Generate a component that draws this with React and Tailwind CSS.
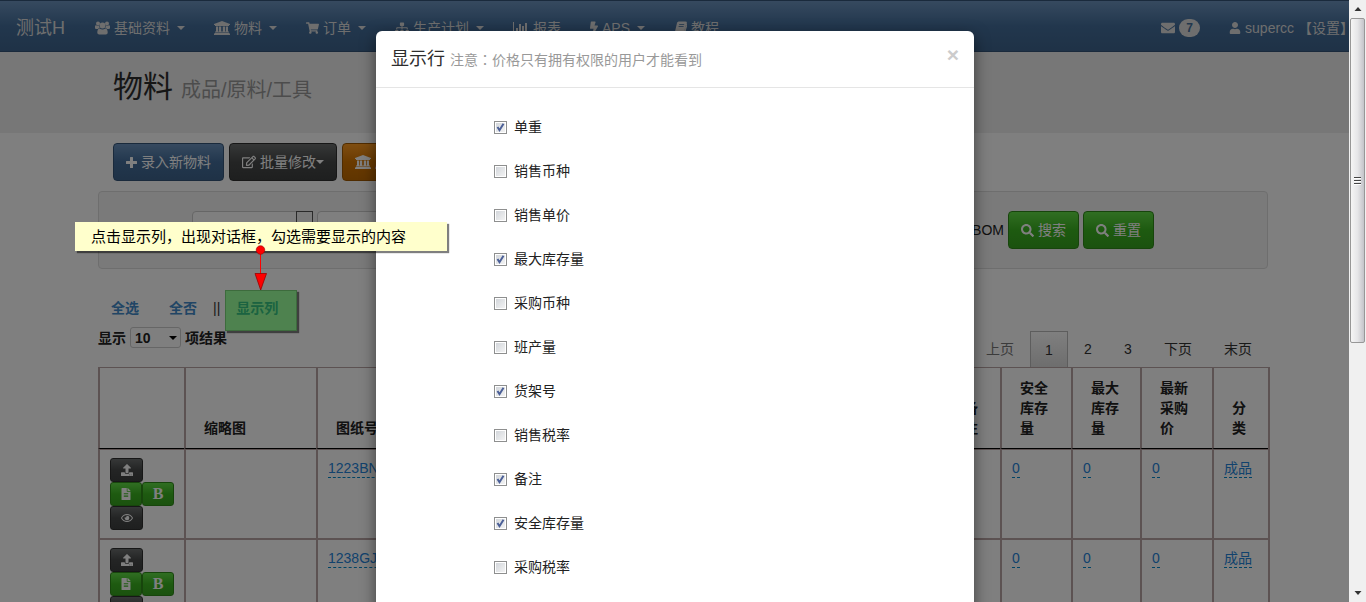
import React from "react";
import {
  FaShoppingCart, FaSitemap, FaBolt, FaEnvelope, FaUser,
  FaRegEdit, FaSearch, FaUpload, FaFileAlt, FaRegEye,
} from "react-icons/fa";

const BLUE = "border-[#345578] bg-linear-to-b from-[#6d94bf] via-[#446e9b] to-[#3e648d]";
const DARK = "border-[#2e2f2f] bg-linear-to-b from-[#6d7070] via-[#474949] to-[#3d3f3f]";
const GREEN = "border-[#2e8a19] bg-linear-to-b from-[#61dd45] via-[#3cb521] to-[#36a41e]";
const ORANGE = "border-[#a15900] bg-linear-to-b from-[#ff9c21] via-[#d47500] to-[#c06a00]";

function Caret() {
  return (
    <svg viewBox="0 0 8 4" className="w-2 h-1 shrink-0" aria-hidden="true">
      <path d="M0 0h8L4 4z" fill="currentColor" />
    </svg>
  );
}

function BarChart({ className }) {
  return (
    <svg viewBox="0 0 16 14" className={className} aria-hidden="true" fill="currentColor">
      <path d="M0 1h1v11h15v1H0zM3 7h2v4H3zM6 3h2v8H6zM9 5h2v6H9zM12 2h2v9h-2z" />
    </svg>
  );
}

function Bank({ className }) {
  return (
    <svg viewBox="0 0 16 14" className={className} aria-hidden="true" fill="currentColor">
      <path d="M8 0l8 3v1h-1v1H1V4H0V3zM2 5.600h2.200v5H5v-5h2.200v5h1.600v-5H11v5h.8v-5H14v5h1v1H1v-1h1zM.5 12h15v.8h.5V14H0v-1.200h.5z" />
    </svg>
  );
}

function Users({ className }) {
  return (
    <svg viewBox="0 0 15 14" className={className} aria-hidden="true" fill="currentColor">
      <circle cx="7.500" cy="4.500" r="3" />
      <circle cx="3" cy="2.500" r="2" />
      <circle cx="12" cy="2.500" r="2" />
      <path d="M0 5.500C0 4.600.5 4 1.200 4.200c1 .7 2 .8 2.800.4 0 1 .3 1.900.9 2.500C4 7.100 3.400 7.500 2.900 8H1.500C.6 8 0 7.500 0 6.700zM15 5.500c0-.9-.5-1.500-1.200-1.300-1 .7-2 .8-2.800.4 0 1-.3 1.900-.9 2.500.9 0 1.500.4 2 .9h1.400c.9 0 1.500-.5 1.500-1.300z" />
      <path d="M4.600 7.400c1.800 1.400 4 1.400 5.800 0 1.600 0 2.300 1.900 2.300 4.200 0 1.200-.8 1.900-1.900 1.900H4.200c-1.100 0-1.900-.7-1.900-1.900 0-2.300.7-4.200 2.300-4.200z" />
    </svg>
  );
}

function Book({ className }) {
  return (
    <svg viewBox="0 0 13 14" className={className} aria-hidden="true">
      <path d="M4.200 1h7.600c.8 0 1.200.6 1 1.300l-2.300 7.900c-.2.600-.6.900-1.300.9H1.700c-.5 0-.5.900.1.900h8c.5 0 .8-.2 1-.7l2-7" fill="none" stroke="currentColor" />
      <path d="M3.500 1h8.300c.6 0 .9.500.7 1.100L10.200 10.500H1L3 2z" fill="currentColor" />
      <path d="M5.200 3.500h5M4.600 5.500h5" stroke="#446e9b" strokeWidth=".8" />
    </svg>
  );
}

function Plus() {
  return (
    <svg viewBox="0 0 11 11" className="size-[11px]" aria-hidden="true">
      <path d="M4 .5Q4 0 4.500 0h2Q7 0 7 .5V4h3.500q.5 0 .5.500v2q0 .5-.5.500H7v3.500q0 .5-.5.500h-2Q4 11 4 10.500V7H.5Q0 7 0 6.500v-2Q0 4 .5 4H4z" fill="currentColor" />
    </svg>
  );
}

const NAV = [
  { label: "基础资料", Icon: Users, caret: true, size: "h-3.5 w-[15px]" },
  { label: "物料", Icon: Bank, caret: true, size: "h-3.5 w-4" },
  { label: "订单", Icon: FaShoppingCart, caret: true, size: "h-3.5 w-[13px]" },
  { label: "生产计划", Icon: FaSitemap, caret: true, size: "h-3.5 w-3.5" },
  { label: "报表", Icon: BarChart, size: "h-3.5 w-4" },
  { label: "APS", Icon: FaBolt, caret: true, size: "h-3.5 w-2" },
  { label: "教程", Icon: Book, size: "h-3.5 w-[13px]" },
];

function Navbar() {
  return (
    <nav className={`flex h-[52px] items-center border-y pt-1 pl-4 pr-3 text-[#ddd] ${BLUE}`}>
      <a href="#home" className="mr-[30px] text-lg">测试H</a>
      <div className="flex flex-1 items-center gap-[29px]">
        {NAV.map(({ label, Icon, caret, size }) => (
          <a key={label} href="#nav" className="flex items-center gap-1 whitespace-nowrap">
            <Icon className={size} />
            <span>{label}</span>
            {caret && <span className="ml-[3px]"><Caret /></span>}
          </a>
        ))}
      </div>
      <a href="#mail" className="mr-[29px] flex items-center gap-1">
        <FaEnvelope className="size-3.5" />
        <span className="flex h-[18px] w-[21px] items-center justify-center rounded-full bg-[#ddd] text-xs font-bold text-[#446e9b]">7</span>
      </a>
      <a href="#user" className="flex items-center gap-1 whitespace-nowrap">
        <FaUser className="size-3" />
        <span>supercc 【设置】</span>
      </a>
    </nav>
  );
}

function Button({ tone, children }) {
  return (
    <button type="button" className={`flex h-[38px] shrink-0 items-center gap-1 rounded border px-3 whitespace-nowrap text-white ${tone}`}>
      {children}
    </button>
  );
}

function SmallButton({ tone, label, children }) {
  return (
    <button type="button" aria-label={label} className={`flex h-6 w-[33px] items-center justify-center rounded-[3px] border text-xs text-white ${tone}`}>
      {children}
    </button>
  );
}

function Filters() {
  return (
    <form className="mt-2.5 flex h-[78px] items-start rounded border border-[#dcdcdc] bg-[#f5f5f5] pt-[19px] pr-[113px] pl-[93px]">
      <span className="relative flex">
        <input aria-label="分类" className="h-[38px] w-[121px] rounded border border-[#ccc] bg-white px-2" />
        <button type="button" aria-label="选择分类" className="absolute top-0 right-0 h-[38px] w-[17px] border border-[#555] bg-[#f5f5f5]" />
      </span>
      <input aria-label="图纸号" className="ml-1 h-[38px] w-[180px] rounded border border-[#ccc] bg-white px-3" />
      <label className="ml-auto flex h-[38px] items-center gap-1 text-[#222]">
        <input type="checkbox" />
        BOM
      </label>
      <div className="ml-1 flex gap-1">
        <Button tone={GREEN}><FaSearch className="size-[13px]" />搜索</Button>
        <Button tone={GREEN}><FaSearch className="size-[13px]" />重置</Button>
      </div>
    </form>
  );
}

function Pager() {
  return (
    <div className="flex h-9 text-[#333]">
      <a href="#prev" className="flex w-[60px] items-center justify-center text-[#777]">上页</a>
      <a href="#p1" className="flex w-[38px] items-center justify-center border border-b-0 border-[#bbb] bg-linear-to-b from-white to-[#dcdcdc]">1</a>
      <a href="#p2" className="flex w-10 items-center justify-center">2</a>
      <a href="#p3" className="flex w-10 items-center justify-center">3</a>
      <a href="#next" className="flex w-[60px] items-center justify-center">下页</a>
      <a href="#last" className="flex w-[60px] items-center justify-center">末页</a>
    </div>
  );
}

const ROWS = ["1223BN01", "1238GJ02"];
const TH = "border-l-2 border-b border-l-[#b8a4a4] border-b-black px-[18px] pb-2.5 align-bottom text-left font-bold";
const TD = "border-l-2 border-b-2 border-[#b8a4a4] px-2.5 pt-2 pb-2 align-top";
const EDIT = "inline-block border-b border-dashed border-[#0088cc] leading-[18px] text-[#2484da]";

function Items() {
  return (
    <table className="w-[1172px] table-fixed border-separate border-spacing-0 border-t border-r-2 border-[#b8a4a4] leading-5 text-[#222]">
      <colgroup>
        <col className="w-[86px]" />
        <col className="w-[132px]" />
        <col className="w-[140px]" />
        <col />
        <col className="w-[56px]" />
        <col className="w-[71px]" />
        <col className="w-[69px]" />
        <col className="w-[72px]" />
        <col className="w-[56px]" />
      </colgroup>
      <thead>
        <tr className="h-[81px]">
          <th className={TH} aria-label="操作" />
          <th className={TH}>缩略图</th>
          <th className={TH}>图纸号</th>
          <th className={TH}>名称</th>
          <th className={TH}>备注</th>
          <th className={TH}>安全库存量</th>
          <th className={TH}>最大库存量</th>
          <th className={TH}>最新采购价</th>
          <th className={TH}>分类</th>
        </tr>
      </thead>
      <tbody className="[&>tr:first-child>td]:border-t">
        {ROWS.map((code) => (
          <tr key={code}>
            <td className={TD}>
              <SmallButton tone={DARK} label="上传"><FaUpload /></SmallButton>
              <div className="flex">
                <SmallButton tone={GREEN} label="文档"><FaFileAlt /></SmallButton>
                <SmallButton tone={GREEN} label="加粗">
                  <span className="font-['Liberation_Serif',serif] text-base leading-none font-bold">B</span>
                </SmallButton>
              </div>
              <SmallButton tone={DARK} label="查看"><FaRegEye /></SmallButton>
            </td>
            <td className={TD} />
            <td className={TD}><a href="#item" className={EDIT}>{code}</a></td>
            <td className={TD} />
            <td className={TD} />
            <td className={TD}><a href="#safe" className={EDIT}>0</a></td>
            <td className={TD}><a href="#max" className={EDIT}>0</a></td>
            <td className={TD}><a href="#price" className={EDIT}>0</a></td>
            <td className={TD}><a href="#kind" className={EDIT}>成品</a></td>
          </tr>
        ))}
      </tbody>
    </table>
  );
}

function Page() {
  return (
    <div>
      <Navbar />
      <header className="bg-[#eee]">
        <div className="mx-auto flex h-[81px] max-w-[1170px] items-baseline gap-2 px-[15px] pt-[13px]">
          <h1 className="text-[30px] leading-[44px] text-[#2d2d2d]">物料</h1>
          <small className="text-xl text-[#999]">成品/原料/工具</small>
        </div>
      </header>
      <main className="mx-auto max-w-[1170px] pt-2.5">
        <div className="flex gap-[5px] px-[15px]">
          <Button tone={BLUE}><Plus />录入新物料</Button>
          <Button tone={DARK}><FaRegEdit className="size-3.5" /><span>批量修改</span><span className="-ml-1"><Caret /></span></Button>
          <Button tone={ORANGE}><Bank className="h-3.5 w-4" />库存盘点</Button>
        </div>
        <Filters />
        <div className="mt-7 flex h-[22px] items-center px-[13px] font-bold text-[#428bca]">
          <a href="#all">全选</a>
          <a href="#none" className="ml-[30px]">全否</a>
          <span className="ml-4 font-normal text-[#333]">||</span>
          <a href="#columns" className="ml-4">显示列</a>
        </div>
        <div className="mt-2 flex items-start justify-between">
          <label className="flex items-center gap-1 font-bold text-[#222]">
            显示
            <span className="relative flex items-center">
              <select aria-label="每页数量" className="h-[21px] w-[51px] appearance-none rounded-[3px] border border-[#ccc] bg-white px-1 font-bold">
                <option>10</option>
              </select>
              <span className="pointer-events-none absolute right-1 text-black"><Caret /></span>
            </span>
            项结果
          </label>
          <div className="pt-1"><Pager /></div>
        </div>
        <Items />
      </main>
    </div>
  );
}

const OPTIONS = [
  ["单重", true], ["销售币种", false], ["销售单价", false], ["最大库存量", true],
  ["采购币种", false], ["班产量", false], ["货架号", true], ["销售税率", false],
  ["备注", true], ["安全库存量", true], ["采购税率", false],
];

function Option({ label, on }) {
  return (
    <label className="flex h-11 items-center gap-[7px] text-[#222]">
      <span className="relative flex size-[13px]">
        <input type="checkbox" defaultChecked={on} className="peer size-[13px] appearance-none border border-[#8e8f8f] bg-linear-to-br from-[#cfd3d8] to-[#f6f6f6] shadow-[inset_0_0_0_1px_#fff]" />
        <svg viewBox="0 0 13 13" className="pointer-events-none absolute inset-0 hidden peer-checked:block" fill="none" stroke="#4b5f97" strokeWidth="2" aria-hidden="true">
          <path d="M3.500 6l2 3.200L9.500 2.800" />
        </svg>
      </span>
      {label}
    </label>
  );
}

function Dialog() {
  return (
    <div role="dialog" aria-label="显示行" className="w-[598px] rounded-t-md bg-white pb-8 shadow-[0_5px_15px_rgba(0,0,0,0.5)]">
      <div className="flex h-[57px] items-center border-b border-[#e5e5e5] px-[15px]">
        <h4 className="text-lg text-[#2d2d2d]">
          显示行 <small className="text-sm text-[#999]">注意<span className="font-['Noto_Sans_CJK_TC',sans-serif]">：</span>价格只有拥有权限的用户才能看到</small>
        </h4>
        <button type="button" aria-label="关闭" className="mb-2.5 ml-auto text-[21px] leading-none font-bold text-[#ccc]">×</button>
      </div>
      <div className="pt-[17px] pl-[118px]">
        {OPTIONS.map(([label, on]) => <Option key={label} label={label} on={on} />)}
      </div>
    </div>
  );
}

function Annotations() {
  return (
    <>
      <div className="absolute top-[290px] left-[225px] h-[41px] w-[72px] border border-[#3d6b3d] bg-[#148716]/45 shadow-[2px_2px_1px_rgba(0,0,0,0.5)]" />
      <p className="absolute top-[222px] left-[75px] h-[29px] w-[372px] bg-[#ffffcc] pl-4 text-[15px] leading-[29px] text-black shadow-[2px_2px_1px_rgba(0,0,0,0.5)]">
        点击显示列，出现对话框，勾选需要显示的内容
      </p>
      <svg viewBox="0 0 14 46" className="absolute top-[245px] left-[254px] h-[46px] w-3.5" aria-hidden="true">
        <path d="M6.500 5v26" stroke="#f00" />
        <circle cx="6.500" cy="5" r="4.300" fill="#f00" stroke="#900" strokeWidth=".6" />
        <path d="M1 28.500h11.500L6.700 45z" fill="#f00" stroke="#900" strokeWidth=".8" />
      </svg>
    </>
  );
}

function Scrollbar() {
  return (
    <div className="absolute inset-y-0 right-0 flex w-[17px] flex-col items-center bg-[#f0f0f0]" aria-hidden="true">
      <svg viewBox="0 0 17 18" className="h-[18px] w-[17px]"><path d="M5.500 11l3.500-4 3.500 4z" fill="#333" /></svg>
      <div className="flex h-[325px] w-[15px] flex-col items-center justify-center gap-px rounded-xs border border-[#979797] bg-linear-to-r from-[#f5f5f5] via-[#e6e6e8] to-[#c4c4c9]">
        <span className="h-0.5 w-[7px] border-t border-[#444] bg-white" />
        <span className="h-0.5 w-[7px] border-t border-[#444] bg-white" />
        <span className="h-0.5 w-[7px] border-t border-[#444] bg-white" />
      </div>
      <svg viewBox="0 0 17 18" className="mt-auto h-[18px] w-[17px]"><path d="M5.500 7h7l-3.500 4z" fill="#333" /></svg>
    </div>
  );
}

export default function App() {
  return (
    <div className="relative h-screen overflow-hidden bg-white font-['Liberation_Sans','Noto_Sans_CJK_SC',sans-serif] text-sm">
      <Page />
      <div className="absolute inset-0 flex items-start justify-center bg-black/50 pt-[31px] pr-4">
        <Dialog />
      </div>
      <Annotations />
      <Scrollbar />
    </div>
  );
}
